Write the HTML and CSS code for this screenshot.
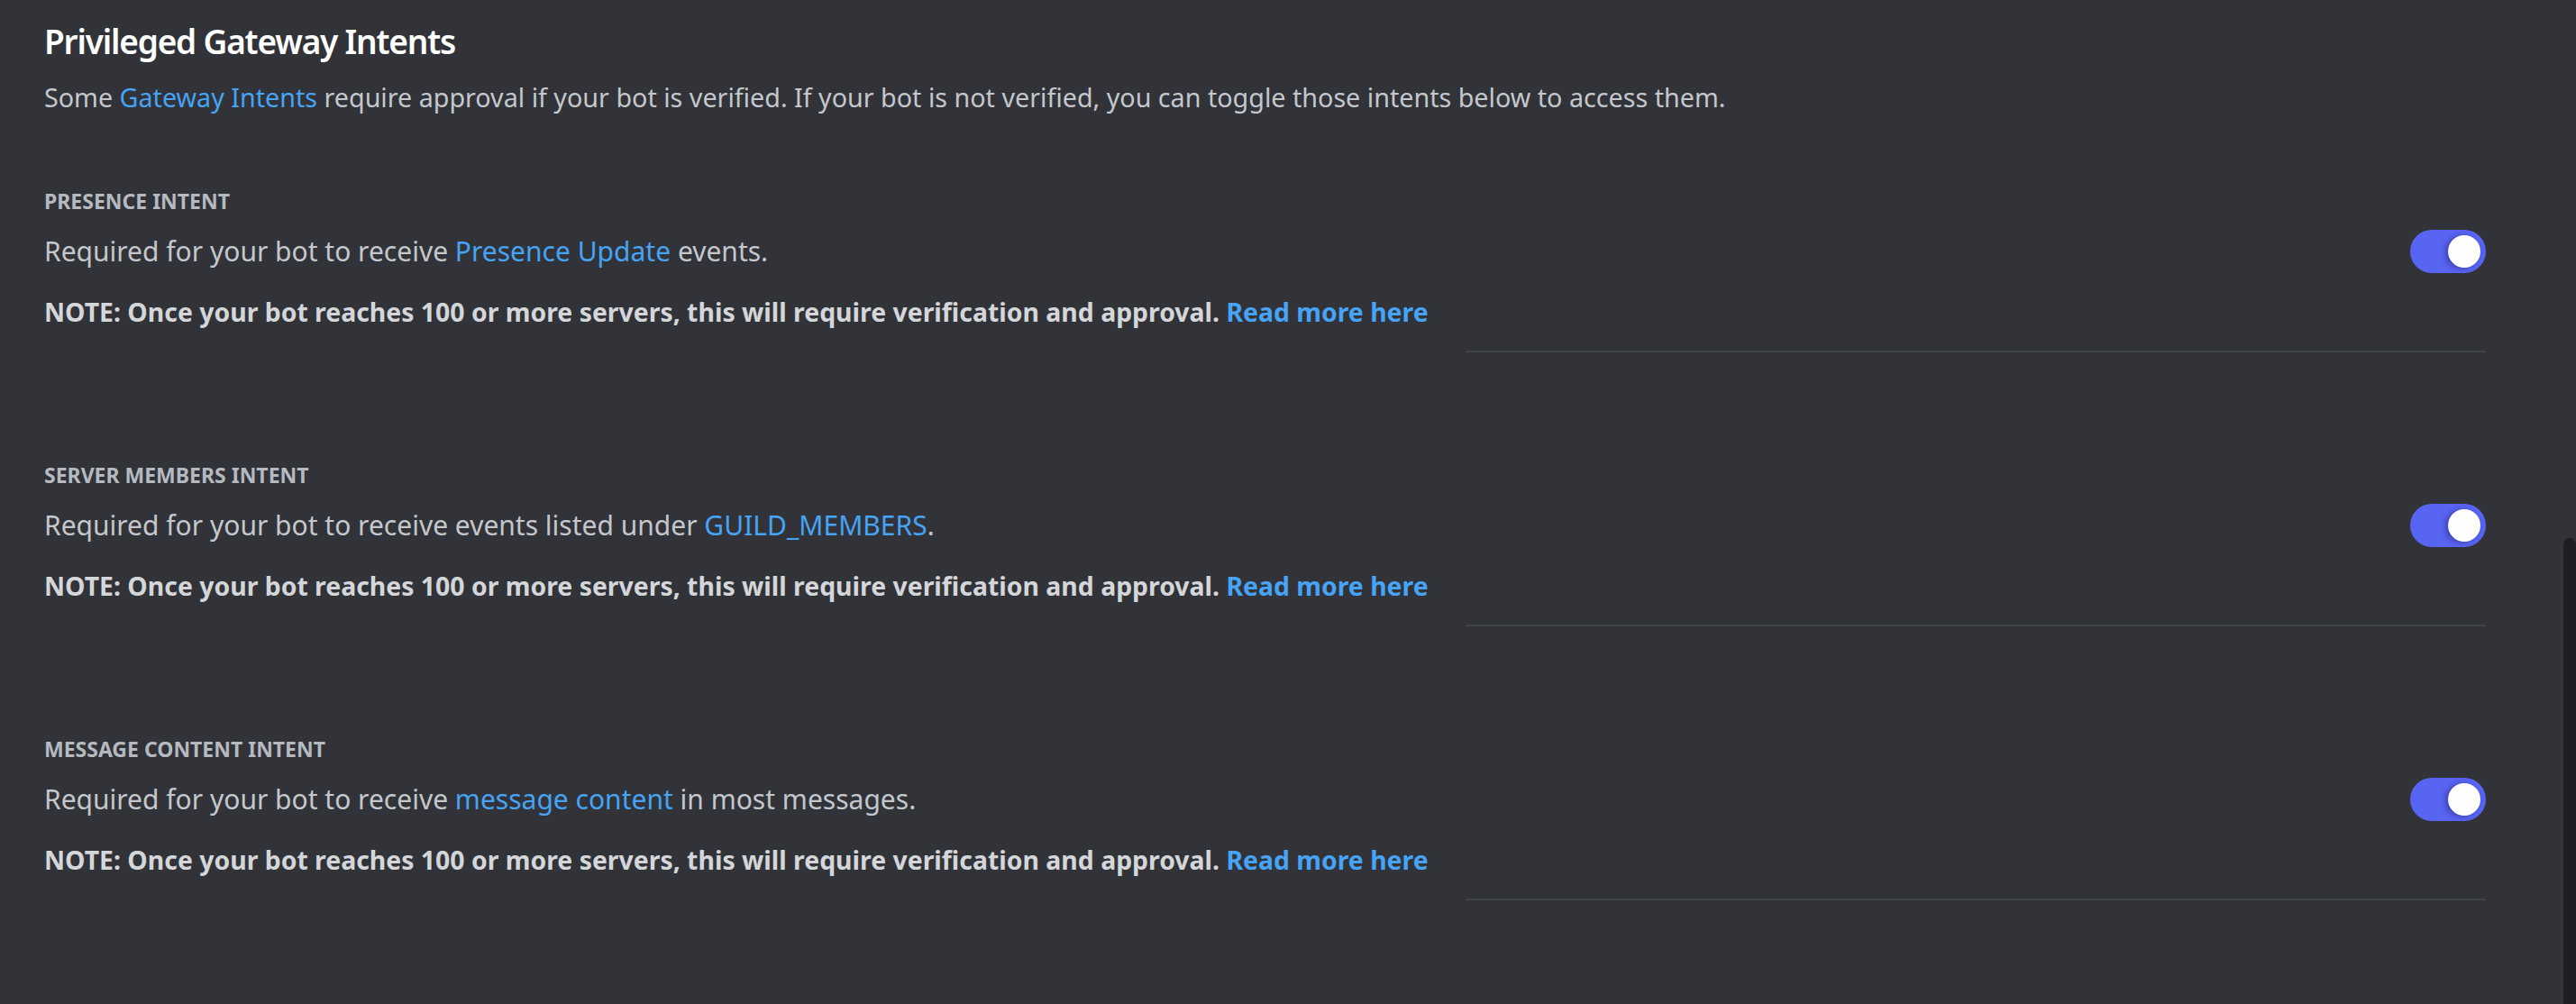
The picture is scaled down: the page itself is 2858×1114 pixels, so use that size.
FILE: index.html
```html
<!DOCTYPE html>
<html>
<head>
<meta charset="utf-8">
<link rel="stylesheet" href="styles.css">
</head>
<body>
<div class="page">
  <h1 class="title">Privileged Gateway Intents</h1>
  <p class="sub">Some <a class="link">Gateway Intents</a> require approval if your bot is verified. If your bot is not verified, you can toggle those intents below to access them.</p>

  <section class="intent">
    <div class="label">PRESENCE INTENT</div>
    <div class="row">
      <div class="desc">Required for your bot to receive <a class="link">Presence Update</a> events.</div>
      <div class="toggle"><span class="knob"></span></div>
    </div>
    <div class="note">NOTE: Once your bot reaches 100 or more servers, this will require verification and approval. <a class="link">Read more here</a></div>
    <div class="divider"></div>
  </section>

  <section class="intent">
    <div class="label">SERVER MEMBERS INTENT</div>
    <div class="row">
      <div class="desc">Required for your bot to receive events listed under <a class="link">GUILD_MEMBERS</a>.</div>
      <div class="toggle"><span class="knob"></span></div>
    </div>
    <div class="note">NOTE: Once your bot reaches 100 or more servers, this will require verification and approval. <a class="link">Read more here</a></div>
    <div class="divider"></div>
  </section>

  <section class="intent">
    <div class="label">MESSAGE CONTENT INTENT</div>
    <div class="row">
      <div class="desc">Required for your bot to receive <a class="link">message content</a> in most messages.</div>
      <div class="toggle"><span class="knob"></span></div>
    </div>
    <div class="note">NOTE: Once your bot reaches 100 or more servers, this will require verification and approval. <a class="link">Read more here</a></div>
    <div class="divider"></div>
  </section>
</div>
<div class="scrollbar"></div>
</body>
</html>
```

FILE: styles.css
```css
html, body {
  margin: 0;
  padding: 0;
  background: #313338;
  height: 100%;
  overflow: hidden;
}
body {
  font-family: "Noto Sans", "Open Sans", sans-serif;
  color: #c4c7cc;
}
.page {
  padding: 22px 100px 0 49px;
}
.title {
  margin: 0;
  font-size: 37px;
  line-height: 48px;
  font-weight: 600;
  letter-spacing: -1.2px;
  color: #ffffff;
}
.sub {
  margin: 18px 0 0;
  font-size: 28.7px;
  line-height: 40px;
  color: #c4c7cc;
}
.link {
  color: #47a3f3;
  cursor: pointer;
}
.intent {
  display: flex;
  flex-direction: column;
}
.intent:first-of-type {
  margin-top: 79px;
}
.intent + .intent {
  margin-top: 120px;
}
.label {
  font-size: 23px;
  line-height: 32px;
  font-weight: 700;
  color: #b5bac1;
}
.row {
  margin-top: 16px;
  display: flex;
  align-items: center;
  justify-content: space-between;
}
.desc {
  font-size: 30px;
  line-height: 48px;
  color: #c4c7cc;
}
.note {
  margin-top: 23px;
  font-size: 28.4px;
  line-height: 40px;
  font-weight: 700;
  color: #d4d6da;
}
.divider {
  margin-top: 23px;
  align-self: flex-end;
  width: 1132px;
  height: 2px;
  background: #3f4448;
}
.toggle {
  position: relative;
  width: 84px;
  height: 48px;
  border-radius: 24px;
  background: #5865f2;
  flex: none;
}
.knob {
  position: absolute;
  top: 6px;
  right: 6px;
  width: 36px;
  height: 36px;
  border-radius: 50%;
  background: #ffffff;
  box-shadow: -3px 1px 6px rgba(30, 20, 90, 0.45);
}
.scrollbar {
  position: fixed;
  right: 0;
  top: 597px;
  bottom: 0;
  width: 14px;
  background: #1e1f22;
  border-radius: 8px 8px 0 0;
}
```
